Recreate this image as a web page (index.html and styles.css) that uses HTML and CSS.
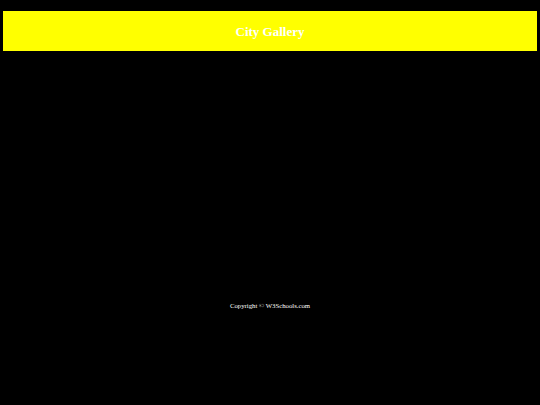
FILE: index.html
```html
<!DOCTYPE html>
<html>
<head>
<meta charset="utf-8">
<title>City Gallery</title>
<link rel="stylesheet" href="styles.css">
</head>
<body>
<header class="header">
  <h1 class="title">City Gallery</h1>
</header>
<main class="content"></main>
<footer class="footer">Copyright © W3Schools.com</footer>
</body>
</html>
```
FILE: styles.css
```css
html, body {
  margin: 0;
  background: #000;
}
body {
  padding: 11px 3px 0;
  font-family: "Liberation Serif", "Times New Roman", serif;
  color: #fff;
}
.header {
  height: 40px;
  background: #ffff00;
  display: flex;
  align-items: center;
  justify-content: center;
}
.title {
  margin: 0;
  font-size: 13px;
  font-weight: bold;
  color: #fff;
  line-height: 1;
}
.content {
  display: block;
  height: 250px;
}
.footer {
  text-align: center;
  font-size: 6.75px;
  line-height: 10px;
  color: #fff;
}
```
